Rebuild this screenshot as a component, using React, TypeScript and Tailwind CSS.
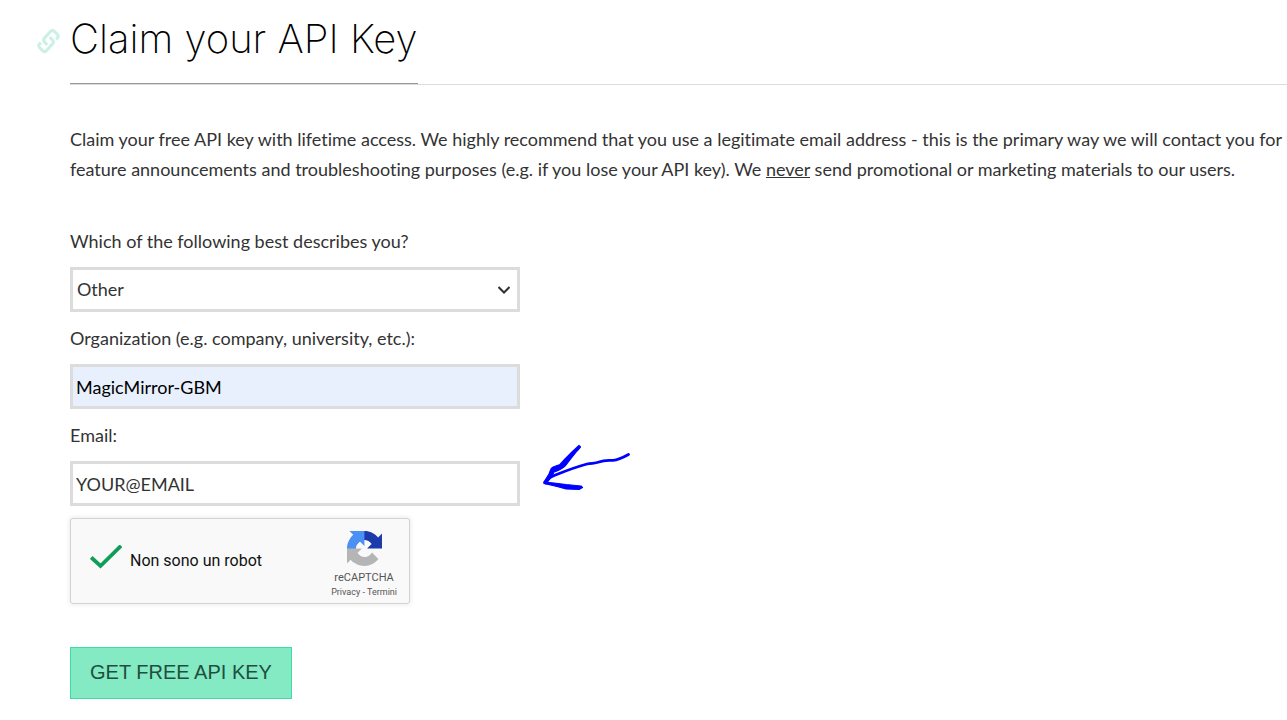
const field =
  "block h-[45px] w-full rounded-none border-[3px] border-[#dcdcdc] text-lg outline-none";

const fieldLabel = "block pt-[11px] pb-[11px] leading-[30px]";

function ChainIcon() {
  return (
    <svg
      viewBox="0 0 70 78"
      className="h-[26px] w-[23px]"
      fill="none"
      stroke="currentColor"
      strokeWidth="9.500"
      strokeLinejoin="round"
      aria-hidden="true"
    >
      <path d="M31 51L22 41Q18 36 22 31L41 10Q47 4 53 10L62 19Q67 25 62 30L58 34" />
      <path d="M39 27L48 37Q52 42 48 47L29 68Q23 74 17 68L8 59Q3 53 8 48L12 44" />
    </svg>
  );
}

function RecaptchaLogo() {
  return (
    <svg viewBox="0 0 64 64" className="size-[35px]" aria-hidden="true">
      <path fill="#1c3aa9" d="M64 31.955l-.033-1.37V4.687l-7.16 7.16C50.948 4.674 42.033.093 32.05.093c-10.4 0-19.622 4.96-25.458 12.64l11.736 11.86a15.55 15.55 0 0 1 4.754-5.334c2.05-1.6 4.952-2.906 8.968-2.906.485 0 .86.057 1.135.163 4.976.393 9.288 3.14 11.828 7.124l-8.307 8.307L64 31.953" />
      <path fill="#4a90f5" d="M31.862.094l-1.37.033H4.594l7.16 7.16C4.58 13.147 0 22.06 0 32.046c0 10.4 4.96 19.622 12.64 25.458L24.5 45.768a15.55 15.55 0 0 1-5.334-4.754c-1.6-2.05-2.906-4.952-2.906-8.968 0-.485.057-.86.163-1.135.393-4.976 3.14-9.288 7.124-11.828l8.307 8.307L31.86.095" />
      <path fill="#b5b5b5" d="M.001 32.045l.033 1.37v25.898l7.16-7.16c5.86 7.173 14.774 11.754 24.76 11.754 10.4 0 19.622-4.96 25.458-12.64l-11.736-11.86a15.55 15.55 0 0 1-4.754 5.334c-2.05 1.6-4.952 2.906-8.968 2.906-.485 0-.86-.057-1.135-.163-4.976-.393-9.288-3.14-11.828-7.124l8.307-8.307c-10.522.04-22.4.066-27.295-.005" />
    </svg>
  );
}

function Recaptcha() {
  return (
    <div className="mt-3 flex h-[86px] max-w-[340px] items-center rounded-[3px] border border-[#d3d3d3] bg-[#f9f9f9] pr-3 pl-[19px] font-['Roboto',sans-serif] shadow-[0_0_4px_1px_rgba(0,0,0,0.08)]">
      <svg viewBox="0 0 32 25" className="mb-2 h-[25px] w-8" aria-hidden="true">
        <path d="M1.200 12.500L10.500 21L31 0.800" fill="none" stroke="#0f9d58" strokeWidth="3.800" />
      </svg>
      <p className="ml-2 flex-1 text-base text-[#111]">Non sono un robot</p>
      <div className="flex flex-col items-center pt-1.5 text-[#555]">
        <RecaptchaLogo />
        <span className="mt-1 text-[11px] leading-4">reCAPTCHA</span>
        <span className="text-[9px] leading-3">
          <a href="#privacy">Privacy</a> - <a href="#terms">Termini</a>
        </span>
      </div>
    </div>
  );
}

function Arrow() {
  return (
    <svg
      viewBox="0 0 100 56"
      className="absolute -top-[21px] left-full ml-4 h-14 w-[100px]"
      fill="none"
      stroke="#0000ff"
      strokeWidth="2.800"
      strokeLinecap="round"
      strokeLinejoin="round"
      aria-hidden="true"
    >
      <path d="M92.500 14.500C88 17 82 20 77 20.300C70 20.500 68 20 63 22C59 23.500 56 23 51 24C42 26.500 32 30 22 34C14 37 13 38 9 42.500" />
      <path fill="#0000ff" strokeWidth="1.200" d="M43 5.500L36 12L29 19L24 24.500C20 26 16 26.500 15 29L13 34L8 42L10 44L16 36L18 32C23 30 27 29 30 25L35 18.500L41 11L44.500 7Z" />
      <path fill="#0000ff" strokeWidth="1.200" d="M8 42L18 43L30 44.500L45 46L46.500 47.500L43 49.500L30 49L21 46.500L8 43.500Z" />
    </svg>
  );
}

export default function App() {
  return (
    <main className="pb-5 pl-[70px] font-['Lato',sans-serif] text-lg text-[#333] [font-variant-ligatures:none]">
      <header className="flex border-b border-[#dcdcdc]">
        <h1 className="relative border-b border-[#999] pt-[7px] pb-3 font-['Inter',sans-serif] text-[40px] leading-[64px] font-extralight text-black">
          <a href="#claim" aria-label="Link to this section" className="absolute top-7 right-full mr-[10px] text-[#cdf0e6]">
            <ChainIcon />
          </a>
          Claim your API Key
        </h1>
      </header>
      <p className="mt-[39px] leading-[30px]">
        Claim your free API key with lifetime access. We highly recommend that you use a legitimate email address - this is the primary way we will contact you for feature announcements and troubleshooting purposes (e.g. if you lose your API key). We <u>never</u> send promotional or marketing materials to our users.
      </p>
      <form className="mt-[31px] max-w-[450px]" onSubmit={(e) => e.preventDefault()}>
        <label htmlFor="role" className={fieldLabel}>
          Which of the following best describes you?
        </label>
        <div className="relative">
          <select id="role" defaultValue="Other" className={`${field} appearance-none bg-white pb-px pl-1`}>
            <option>Other</option>
            <option>Student</option>
            <option>Developer</option>
          </select>
          <svg viewBox="0 0 12 8" className="pointer-events-none absolute top-[19px] right-[10px] h-2 w-3" fill="none" stroke="#333" strokeWidth="2" aria-hidden="true">
            <path d="M0.500 1L6 6.500L11.500 1" />
          </svg>
        </div>
        <label htmlFor="organization" className={fieldLabel}>
          Organization (e.g. company, university, etc.):
        </label>
        <input id="organization" defaultValue="MagicMirror-GBM" className={`${field} bg-[#e8f0fe] px-[3px] text-black`} />
        <label htmlFor="email" className={fieldLabel}>
          Email:
        </label>
        <div className="relative">
          <input id="email" defaultValue="YOUR@EMAIL" className={`${field} bg-white px-[3px]`} />
          <Arrow />
        </div>
        <Recaptcha />
        <button type="submit" className="mt-[43px] h-[52px] border border-[#3fdba4] bg-[#84eac3] px-[19px] pb-0.5 font-['Liberation_Sans',sans-serif] text-xl text-[#1f4f3f]">
          GET FREE API KEY
        </button>
      </form>
    </main>
  );
}
